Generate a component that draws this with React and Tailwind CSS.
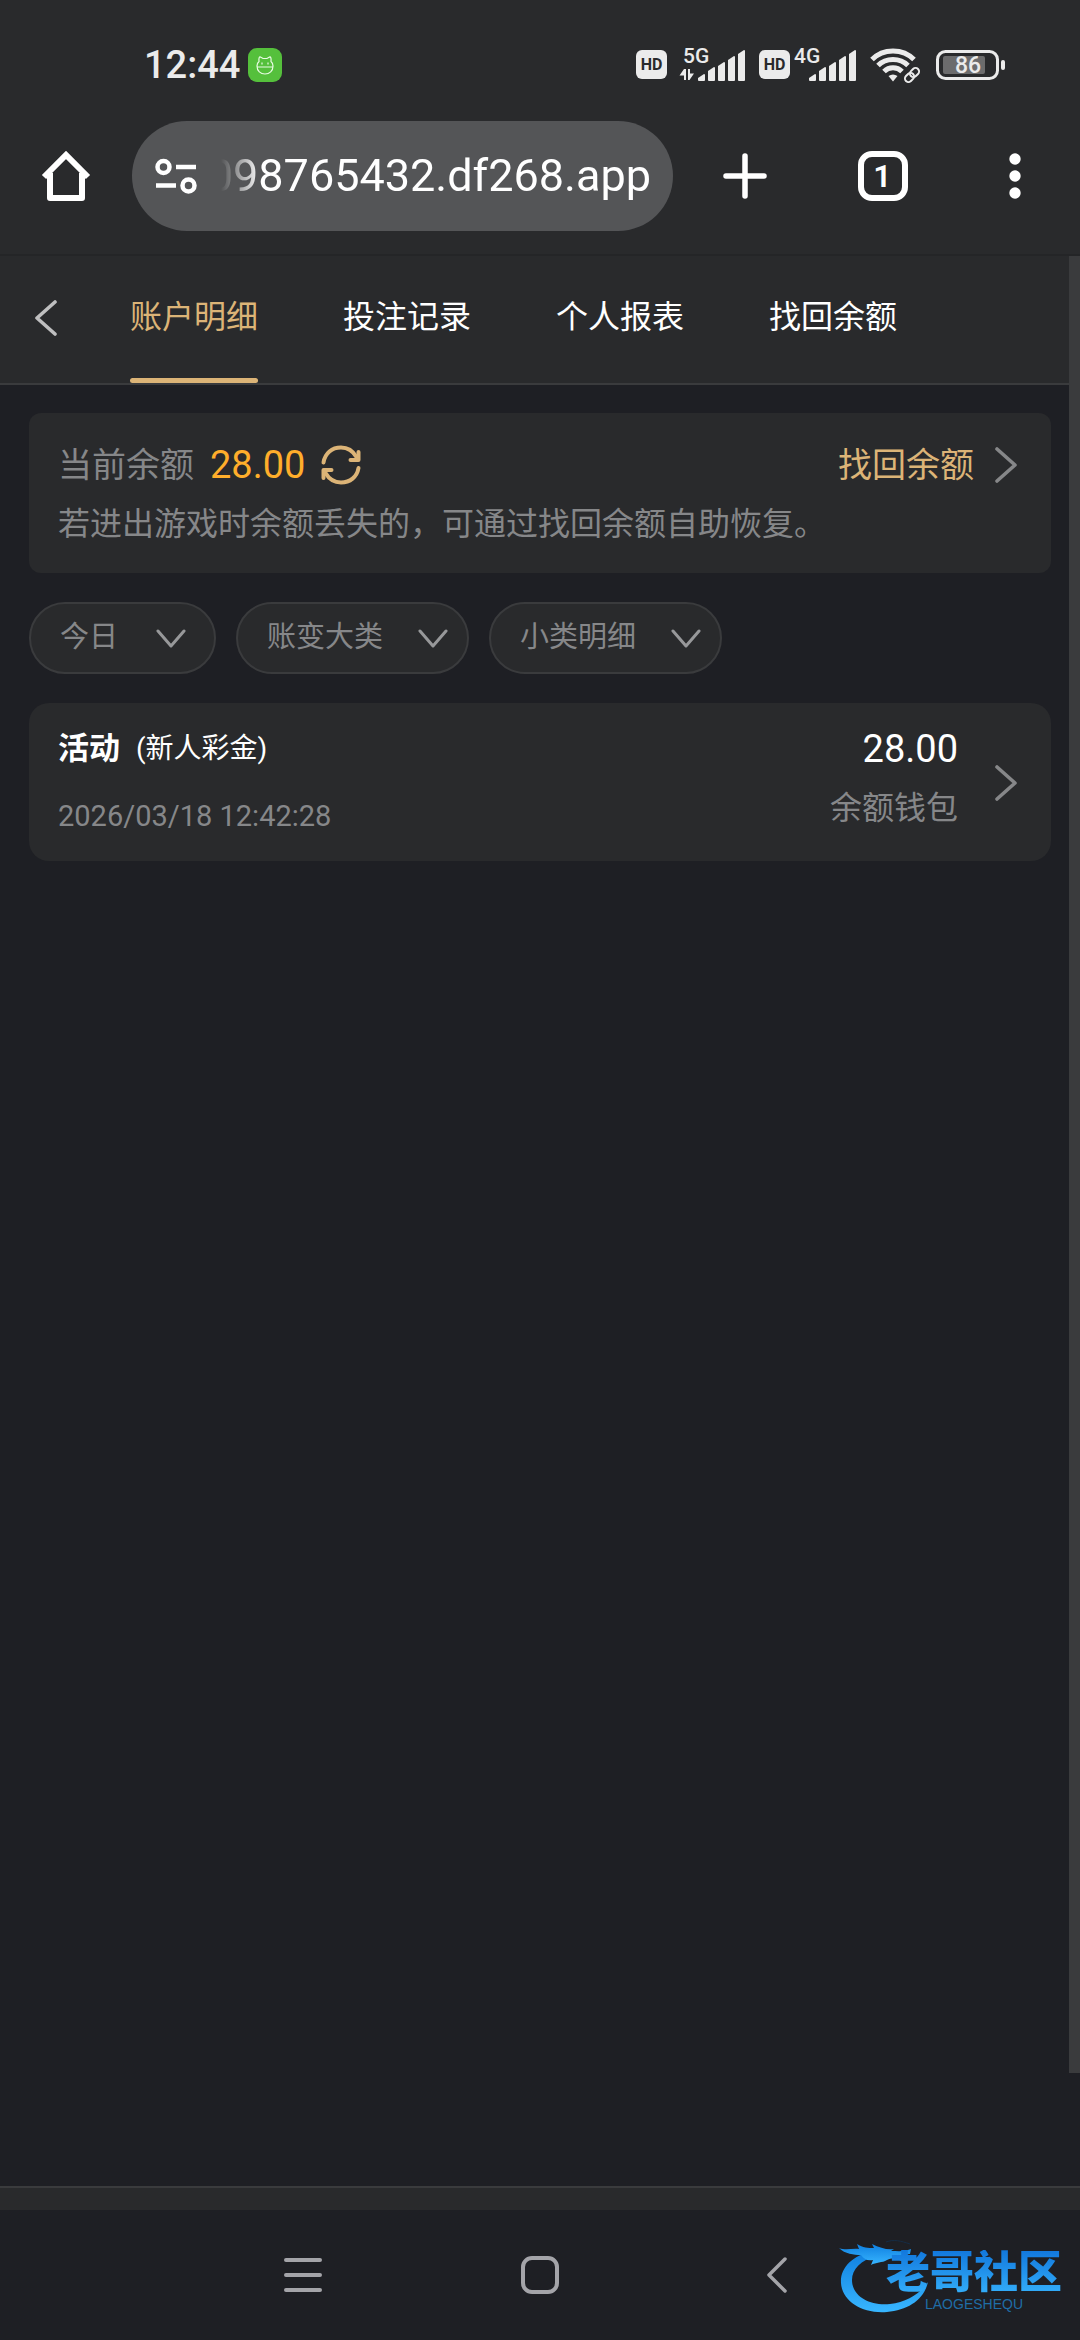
import { useState } from 'react';
import clsx from 'clsx';

const TABS = ['账户明细', '投注记录', '个人报表', '找回余额'];

const FILTERS = [
  { id: 'date', label: '今日', width: 'w-[187px]', arrow: 'right-[30px]' },
  { id: 'category', label: '账变大类', width: 'w-[233px]', arrow: 'right-[21px]' },
  { id: 'detail', label: '小类明细', width: 'w-[233px]', arrow: 'right-[21px]' },
];

const RECORDS = [
  {
    id: 1,
    type: '活动',
    note: '(新人彩金)',
    time: '2026/03/18 12:42:28',
    amount: '28.00',
    wallet: '余额钱包',
  },
];

const SIGNAL_TOPS = [27, 20, 15, 9, 3];

const HdBadge = () => (
  <span className="flex h-[29px] w-[31px] items-center justify-center rounded-md bg-[#ebebeb] text-base leading-none font-bold text-[#292a2c]">
    HD
  </span>
);

const Signal = ({ label, arrows }) => (
  <svg width="68" height="52" viewBox="0 -8 68 52" fill="#ebebeb">
    <text x="4" y="16" fontSize="21" fontWeight="500">
      {label}
    </text>
    {arrows && <path d="M7 22v11H5v-4.500H0.500L5 22zM9 22h2v4.500h4L10.500 33H9z" />}
    {SIGNAL_TOPS.map((top, i) => (
      <path
        key={top}
        d={`M${19 + i * 10} ${top + 4}l6-4q1 0 1 1V${33}q0 1-1 1h-5q-1 0-1-1z`}
      />
    ))}
  </svg>
);

const Wifi = () => (
  <svg width="50" height="36" viewBox="0 0 50 36" fill="none" stroke="#ebebeb">
    <path d="M2 12.500C13 1 33 1 44 12.500" strokeWidth="5" />
    <path d="M8 18.500C16 10.500 30 10.500 38 18.500" strokeWidth="5" />
    <path d="M14 24.500C19 19.500 27 19.500 32 24.500" strokeWidth="5" />
    <path d="M18.500 29Q23 26 27.500 29L23 34.500z" fill="#ebebeb" stroke="none" />
    <g strokeWidth="2" transform="rotate(-45 42 28)">
      <rect x="33.500" y="24.500" width="10" height="7" rx="3.500" />
      <rect x="40.500" y="24.500" width="10" height="7" rx="3.500" />
    </g>
  </svg>
);

const Battery = ({ level }) => (
  <svg width="70" height="32" viewBox="0 0 70 32">
    <rect x="1.500" y="2.500" width="60" height="27" rx="8" fill="none" stroke="#ebebeb" strokeWidth="3" />
    <rect x="7" y="7" width="42" height="18" rx="2" fill="#6c6c6d" />
    <rect x="65" y="11" width="4" height="10" rx="2" fill="#ebebeb" />
    <text x="32" y="24" textAnchor="middle" fontSize="23" fontWeight="500" fill="#ebebeb">
      {level}
    </text>
  </svg>
);

const Chevron = ({ className }) => (
  <svg width="24" height="36" viewBox="0 0 24 36" className={className} fill="none" stroke="currentColor" strokeWidth="3.600" strokeLinecap="round" strokeLinejoin="round">
    <path d="M3 2l18 16L3 34" />
  </svg>
);

const StatusBar = () => (
  <div className="flex h-[121px] items-center justify-between pt-2 pr-[74px] pl-36 text-[#ebebeb]">
    <div className="flex items-center gap-2">
      <span className="text-[38px] leading-none font-medium">12:44</span>
      <svg width="34" height="34" viewBox="0 0 34 34" fill="none" stroke="#e9fbe4" strokeWidth="1.200">
        <rect width="34" height="34" rx="9" fill="#55c03c" stroke="none" />
        <path d="M11 13.500Q10.500 8.500 12.500 9l2.500 1.500h4L21.500 9q2-.5 1.500 4.500Q25 15 25 18c0 5-3.500 8-8 8s-8-3-8-8q0-3 2-4.500z" />
        <path d="M9 19h16M14 14.500v2M20 14.500v2" />
      </svg>
    </div>
    <div className="flex items-center">
      <HdBadge />
      <span className="ml-3">
        <Signal label="5G" arrows />
      </span>
      <span className="ml-3">
        <HdBadge />
      </span>
      <Signal label="4G" />
      <span className="ml-3">
        <Wifi />
      </span>
      <span className="ml-4">
        <Battery level="86" />
      </span>
    </div>
  </div>
);

const BrowserBar = () => (
  <div className="flex border-b-2 border-[#242527] pb-[23px] text-white">
    <button aria-label="主页" className="flex w-[132px] shrink-0 items-center justify-center">
      <svg width="50" height="52" viewBox="0 0 50 52" fill="none" stroke="currentColor" strokeWidth="6">
        <path d="M3 27L25 5l22 22" strokeLinejoin="miter" />
        <path d="M9 23v25h32V23" strokeLinejoin="round" />
      </svg>
    </button>
    <div className="flex h-[110px] min-w-0 flex-1 items-center rounded-full bg-[#545557] pr-[22px] pl-[23px]">
      <svg width="42" height="36" viewBox="0 0 42 36" fill="none" stroke="currentColor" strokeWidth="4.500" className="shrink-0">
        <circle cx="8.500" cy="9" r="6" />
        <path d="M21 9h20M1 27.500h20" />
        <circle cx="33.500" cy="27.500" r="6" />
      </svg>
      <div className="ml-[22px] flex h-full min-w-0 flex-1 justify-end overflow-hidden mask-l-from-[390px] mask-l-to-[430px]">
        <input
          aria-label="网址"
          defaultValue="098765432.df268.app"
          className="w-[480px] shrink-0 bg-transparent text-right text-[45px] outline-none"
        />
      </div>
    </div>
    <button aria-label="新建标签页" className="flex w-[143px] shrink-0 items-center justify-center">
      <svg width="44" height="46" viewBox="0 0 44 46" stroke="currentColor" strokeWidth="5.500" strokeLinecap="round">
        <path d="M22 3v40M3 23h38" />
      </svg>
    </button>
    <button aria-label="标签页" className="flex w-[133px] shrink-0 items-center justify-center">
      <span className="flex size-[50px] items-center justify-center rounded-[14px] border-6 border-white text-[32px] leading-none font-semibold">
        1
      </span>
    </button>
    <button aria-label="菜单" className="flex w-[131px] shrink-0 items-center justify-center">
      <svg width="12" height="46" viewBox="0 0 12 46" fill="currentColor">
        <circle cx="6" cy="6" r="5.700" />
        <circle cx="6" cy="23" r="5.700" />
        <circle cx="6" cy="40" r="5.700" />
      </svg>
    </button>
  </div>
);

const TabBar = ({ active, onChange }) => (
  <header className="flex h-[129px] border-b-2 border-[#3a3b3d] bg-[#292a2c]">
    <button aria-label="返回" className="flex w-[130px] items-center pb-1 pl-[34px] text-[#bfbfc0]">
      <Chevron className="rotate-180" />
    </button>
    <nav className="flex gap-[85px]">
      {TABS.map((tab) => (
        <a
          key={tab}
          href="#"
          onClick={() => onChange(tab)}
          className={clsx(
            'flex flex-col text-[32px]',
            tab === active ? 'text-[#dcb477]' : 'text-white'
          )}
        >
          <span className="flex flex-1 items-center">{tab}</span>
          <span className={clsx('h-[5px] rounded-full', tab === active && 'bg-[#dcb477]')} />
        </a>
      ))}
    </nav>
  </header>
);

const BalanceCard = () => (
  <section className="rounded-xl bg-[#292a2c] px-[29px] pt-7 pb-[26px] text-[#868789]">
    <div className="flex h-12 items-center">
      <span className="text-[34px]">当前余额</span>
      <span className="ml-4 text-[38px] text-[#ffae2b]">28.00</span>
      <button aria-label="刷新余额" className="ml-4 text-[#dcb477]">
        <svg width="40" height="40" viewBox="0 0 40 40" fill="none" stroke="currentColor" strokeWidth="4" strokeLinecap="round" strokeLinejoin="round">
          <path d="M2.500 17.500C4 8 11 2.500 20 2.500c7 0 12 3.500 15.500 9.500" />
          <path d="M37.500 7v8h-8" />
          <path d="M37.500 23C36 32 29 37.500 20 37.500c-7 0-12-3.500-15.500-9.500" />
          <path d="M2.500 33v-8h8" />
        </svg>
      </button>
      <a href="#" className="ml-auto flex items-center gap-5 text-[34px] text-[#dcb477]">
        找回余额
        <Chevron className="mr-1 text-[#868789]" />
      </a>
    </div>
    <p className="mt-3 h-[46px] text-[32px] leading-[46px]">
      若进出游戏时余额丢失的，可通过找回余额自助恢复。
    </p>
  </section>
);

const Filters = () => (
  <div className="flex gap-5">
    {FILTERS.map(({ id, label, width, arrow }) => (
      <div key={id} className={clsx('relative', width)}>
        <select
          aria-label={label}
          className="h-[72px] w-full appearance-none rounded-full border-2 border-[#3a3b3d] bg-[#292a2c] pl-[29px] text-[29px] text-[#868789]"
        >
          <option>{label}</option>
        </select>
        <svg
          width="30"
          height="20"
          viewBox="0 0 30 20"
          fill="none"
          stroke="#97989a"
          strokeWidth="3"
          strokeLinecap="round"
          strokeLinejoin="round"
          className={clsx('pointer-events-none absolute top-[27px]', arrow)}
        >
          <path d="M2 2l13 15L28 2" />
        </svg>
      </div>
    ))}
  </div>
);

const RecordCard = ({ record }) => (
  <a href="#" className="flex items-start rounded-[20px] bg-[#292a2c] px-[29px] pt-6 pb-[22px]">
    <div className="flex flex-col gap-6">
      <div className="flex h-11 items-center gap-4 text-white">
        <span className="text-[31px] font-bold">{record.type}</span>
        <span className="text-[28px]">{record.note}</span>
      </div>
      <time className="flex h-11 items-center text-[29px] text-[#868789]">{record.time}</time>
    </div>
    <div className="ml-auto flex flex-col items-end gap-[15px]">
      <span className="flex h-11 items-center text-[38px] text-white">{record.amount}</span>
      <span className="flex h-11 items-center text-[32px] text-[#868789]">{record.wallet}</span>
    </div>
    <Chevron className="mr-1 ml-9 self-center text-[#868789]" />
  </a>
);

const Watermark = () => (
  <div className="absolute right-[18px] bottom-6 flex items-end">
    <svg width="96" height="82" viewBox="0 0 96 82" className="-mr-12">
      <defs>
        <linearGradient id="dragon" x1="0" y1="0" x2="0" y2="1">
          <stop offset="0" stopColor="#0f7fe0" />
          <stop offset="1" stopColor="#38b6ff" />
        </linearGradient>
      </defs>
      <g fill="url(#dragon)">
        <path d="M34 17C14 22 2 34 3 49c1 18 21 31 46 29 21-2 37-12 41-30-9 13-22 20-38 22C31 72 14 62 14 46c0-11 9-20 24-24z" />
        <path d="M1 14c7 3 13 0 20 1l-2-5c6 4 11 4 17 4l-2-4c8 4 15 6 22 5l-3 2c7 0 13 1 20-2l-1 5-9 1 6 4-6 2c-5-3-9-3-14-1-5 3-11 2-16 5l2-5c-6 1-9-1-12-5-7 0-16-1-22-7z" />
        <path d="M48 8c8-3 15-1 24 2" fill="none" stroke="#152c45" />
      </g>
    </svg>
    <div className="relative flex flex-col items-center pb-1">
      <span className="bg-linear-to-b from-[#1277dc] to-[#35b0fb] bg-clip-text text-[44px] leading-[46px] font-black text-transparent">
        老哥社区
      </span>
      <span className="font-['Liberation_Sans'] text-sm leading-4 text-[#1f6da6]">LAOGESHEQU</span>
    </div>
  </div>
);

const SystemNav = () => (
  <footer className="relative flex h-[130px] items-center justify-center bg-[#1e1f24] text-[#a4a4a9]">
    <button aria-label="最近任务" className="flex w-[237px] justify-center">
      <svg width="38" height="38" viewBox="0 0 38 38" stroke="currentColor" strokeWidth="4" strokeLinecap="round">
        <path d="M2 4h34M2 19h34M2 34h34" />
      </svg>
    </button>
    <button aria-label="桌面" className="flex w-[237px] justify-center">
      <svg width="38" height="38" viewBox="0 0 38 38" fill="none" stroke="currentColor" strokeWidth="4">
        <rect x="2" y="2" width="34" height="34" rx="9" />
      </svg>
    </button>
    <button aria-label="后退" className="flex w-[237px] justify-center">
      <svg width="20" height="38" viewBox="0 0 20 38" fill="none" stroke="currentColor" strokeWidth="3.500" strokeLinecap="round" strokeLinejoin="round">
        <path d="M18 3L2 19l16 16" />
      </svg>
    </button>
    <Watermark />
  </footer>
);

export default function App() {
  const [active, setActive] = useState(TABS[0]);

  return (
    <div className="flex min-h-screen flex-col bg-[#292a2c] font-['Roboto','Noto_Sans_CJK_SC',sans-serif]">
      <StatusBar />
      <BrowserBar />
      <div className="relative flex flex-1 flex-col bg-[#1e1f24]">
        <TabBar active={active} onChange={setActive} />
        <main className="flex flex-1 flex-col gap-[29px] px-[29px] pt-7">
          <BalanceCard />
          <Filters />
          {RECORDS.map((record) => (
            <RecordCard key={record.id} record={record} />
          ))}
        </main>
        <div className="h-6 border-t-2 border-[#3a3b3d] bg-[#292a2c]" />
        <div className="absolute top-0 right-0 h-[93%] w-[11px] bg-[#3a3b3d]" />
      </div>
      <SystemNav />
    </div>
  );
}
